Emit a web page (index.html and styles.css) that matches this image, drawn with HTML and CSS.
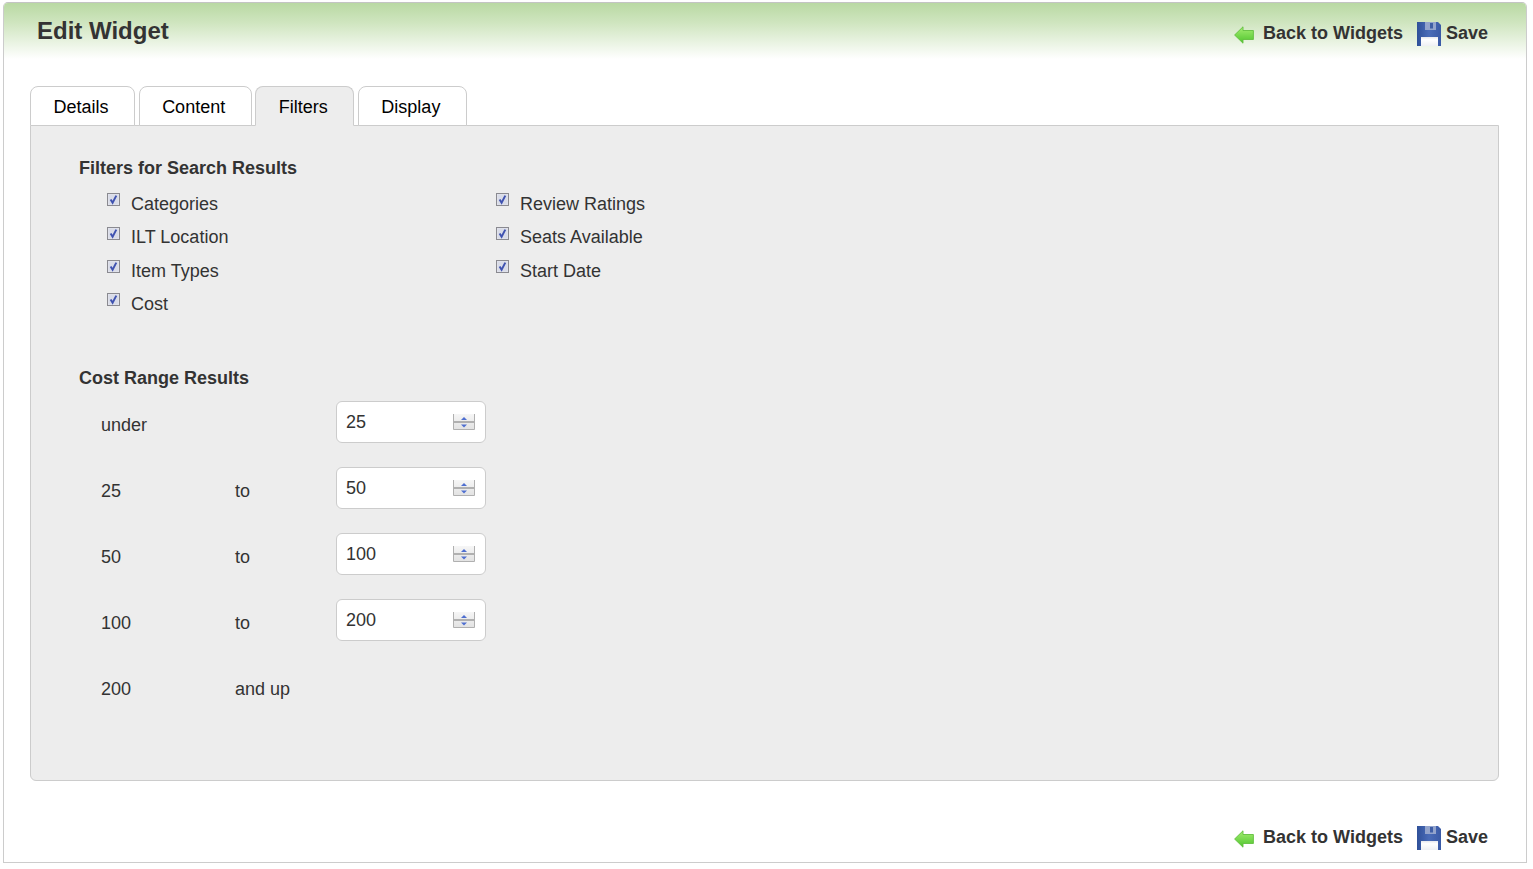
FILE: index.html
```html
<!DOCTYPE html>
<html lang="en">
<head>
<meta charset="utf-8">
<title>Edit Widget</title>
<link rel="stylesheet" href="styles.css">
</head>
<body>
<svg class="defs" width="0" height="0" aria-hidden="true">
  <defs>
    <linearGradient id="arrowFill" x1="0" y1="0" x2="0" y2="1">
      <stop offset="0" stop-color="#a4ee70"/>
      <stop offset="1" stop-color="#4fc42e"/>
    </linearGradient>
    <linearGradient id="diskFill" x1="0" y1="0" x2="1" y2="0">
      <stop offset="0" stop-color="#2f5099"/>
      <stop offset="0.5" stop-color="#4a6cb8"/>
      <stop offset="1" stop-color="#3a5aa6"/>
    </linearGradient>
    <linearGradient id="labelFill" x1="0" y1="0" x2="0" y2="1">
      <stop offset="0" stop-color="#e6e8ee"/>
      <stop offset="0.3" stop-color="#ffffff"/>
      <stop offset="1" stop-color="#eef0f4"/>
    </linearGradient>
    <linearGradient id="spinFill" x1="0" y1="0" x2="0" y2="1">
      <stop offset="0" stop-color="#f6f6f6"/>
      <stop offset="1" stop-color="#e2e2e2"/>
    </linearGradient>
    <symbol id="arrow" viewBox="0 0 20 18">
      <path d="M0.6 9 L9 0.8 L9 4.5 L19.4 4.5 L19.4 13.5 L9 13.5 L9 17.2 Z" fill="url(#arrowFill)" stroke="#62c040" stroke-width="0.9" stroke-linejoin="round"/>
    </symbol>
    <symbol id="disk" viewBox="0 0 24 24">
      <path d="M0 0H21L24 3V24H0Z" fill="url(#diskFill)"/>
      <rect x="8" y="0" width="11" height="8" fill="#93a4cc"/>
      <rect x="13" y="1" width="3" height="5.5" fill="#3f5ea6"/>
      <rect x="4" y="15" width="17" height="9" fill="url(#labelFill)"/>
    </symbol>
    <symbol id="check" viewBox="0 0 13 13">
      <rect x="0.5" y="0.5" width="12" height="12" fill="#e4e6ee" stroke="#8a8a90"/>
      <rect x="1.5" y="1.5" width="10" height="10" fill="#d9dce8"/>
      <path d="M3.6 6.5 L5.6 9.8 L9.3 2.6" fill="none" stroke="#3f52b0" stroke-width="1.9"/>
    </symbol>
    <symbol id="spin" viewBox="0 0 22 16">
      <path d="M0.5 0V15.5H21.5V0" fill="url(#spinFill)" stroke="#b0b0b0"/>
      <rect x="0" y="7" width="22" height="2" fill="#b0b0b0"/>
      <path d="M11 3L14 6H8Z" fill="#4f6fd0"/>
      <path d="M11 13.5L14 10.5H8Z" fill="#4f6fd0"/>
    </symbol>
  </defs>
</svg>
<main class="page">
  <header class="head">
    <h1 class="title">Edit Widget</h1>
    <nav class="actions">
      <a class="action"><svg class="ico-arrow"><use href="#arrow"/></svg>Back to Widgets</a>
      <a class="action action-save"><svg class="ico-disk"><use href="#disk"/></svg>Save</a>
    </nav>
  </header>
  <div class="tabs">
    <div class="tab">Details</div>
    <div class="tab">Content</div>
    <div class="tab tab-active">Filters</div>
    <div class="tab">Display</div>
  </div>
  <section class="panel">
    <h2 class="section-title">Filters for Search Results</h2>
    <div class="filters">
      <label class="filter"><svg class="check"><use href="#check"/></svg>Categories</label>
      <label class="filter"><svg class="check"><use href="#check"/></svg>Review Ratings</label>
      <label class="filter"><svg class="check"><use href="#check"/></svg>ILT Location</label>
      <label class="filter"><svg class="check"><use href="#check"/></svg>Seats Available</label>
      <label class="filter"><svg class="check"><use href="#check"/></svg>Item Types</label>
      <label class="filter"><svg class="check"><use href="#check"/></svg>Start Date</label>
      <label class="filter"><svg class="check"><use href="#check"/></svg>Cost</label>
    </div>
    <h2 class="section-title section-cost">Cost Range Results</h2>
    <div class="ranges">
      <div class="range"><span>under</span><span></span><div class="spinner"><span>25</span><svg class="spin"><use href="#spin"/></svg></div></div>
      <div class="range"><span>25</span><span>to</span><div class="spinner"><span>50</span><svg class="spin"><use href="#spin"/></svg></div></div>
      <div class="range"><span>50</span><span>to</span><div class="spinner"><span>100</span><svg class="spin"><use href="#spin"/></svg></div></div>
      <div class="range"><span>100</span><span>to</span><div class="spinner"><span>200</span><svg class="spin"><use href="#spin"/></svg></div></div>
      <div class="range"><span>200</span><span>and up</span></div>
    </div>
  </section>
  <footer class="foot">
    <nav class="actions">
      <a class="action"><svg class="ico-arrow"><use href="#arrow"/></svg>Back to Widgets</a>
      <a class="action action-save"><svg class="ico-disk"><use href="#disk"/></svg>Save</a>
    </nav>
  </footer>
</main>
</body>
</html>
```
FILE: styles.css
```css
* { box-sizing: border-box; }
html, body { margin: 0; padding: 0; background: #fff; }
body {
  height: 869px;
  padding: 2px 6px 6px 3px;
  font-family: "Liberation Sans", Arial, sans-serif;
  font-size: 18px;
  color: #333;
  overflow: hidden;
}
.defs { position: absolute; }
.page {
  width: 1524px;
  height: 861px;
  border: 1px solid #ccc;
  border-top-color: #c4c4c4;
  border-radius: 5px 5px 0 0;
  display: flex;
  flex-direction: column;
}
.head {
  height: 56px;
  flex: none;
  padding-right: 38px;
  display: flex;
  justify-content: space-between;
  align-items: flex-start;
  background: linear-gradient(#b9d9a3 0%, #cfe5bf 35%, #ffffff 100%);
  border-radius: 4px 4px 0 0;
}
.title {
  margin: 14px 0 0 33px;
  font-size: 24px;
  line-height: 28px;
  font-weight: bold;
  color: #333;
}
.actions {
  display: flex;
  align-items: flex-start;
  font-weight: bold;
  font-size: 18px;
  line-height: 22px;
  color: #333;
}
.head .actions { margin-top: 19px; }
.action { display: flex; align-items: flex-start; }
.action-save { margin-left: 14px; }
.ico-arrow { width: 20px; height: 18px; margin: 4px 9px 0 0; }
.ico-disk { width: 24px; height: 24px; margin: 0 5px 0 0; }
.tabs {
  display: flex;
  gap: 3.6px;
  margin: 27px 0 0 26px;
  height: 40px;
  flex: none;
  position: relative;
  z-index: 1;
}
.tab {
  height: 40px;
  padding: 9px 25.5px 0 22.5px;
  border: 1px solid #ccc;
  border-radius: 8px 8px 0 0;
  background: #fff;
  color: #000;
  line-height: 22px;
  font-size: 18px;
}
.tab-active { background: #ededed; border-bottom-color: #ededed; }
.panel {
  margin: -1px 0 0 26px;
  width: 1469px;
  height: 656px;
  flex: none;
  padding: 31px 0 0 48px;
  background: #ededed;
  border: 1px solid #ccc;
  border-radius: 0 0 6px 6px;
}
.section-title {
  margin: 0;
  font-size: 18px;
  line-height: 22px;
  font-weight: bold;
  color: #333;
}
.filters {
  display: grid;
  grid-template-columns: 389px 389px;
  grid-auto-rows: 33.4px;
  margin: 14px 0 0 28px;
}
.filter { display: flex; align-items: flex-start; line-height: 22px; }
.check { width: 13px; height: 13px; margin: 0.3px 11px 0 0; flex: none; }
.section-cost { margin-top: 40.4px; }
.ranges { margin: 12px 0 0 22px; }
.range {
  display: grid;
  grid-template-columns: 134px 101px 150px;
  height: 66px;
  line-height: 22px;
}
.range > span { padding-top: 13px; }
.spinner {
  height: 42px;
  background: #fff;
  border: 1px solid #ccc;
  border-radius: 6px;
  padding: 0 10px 0 9px;
  display: flex;
  align-items: center;
  justify-content: space-between;
}
.spin { width: 22px; height: 16px; flex: none; }
.foot {
  flex: 1;
  padding: 45px 38px 0 0;
  display: flex;
  justify-content: flex-end;
  align-items: flex-start;
}
```
